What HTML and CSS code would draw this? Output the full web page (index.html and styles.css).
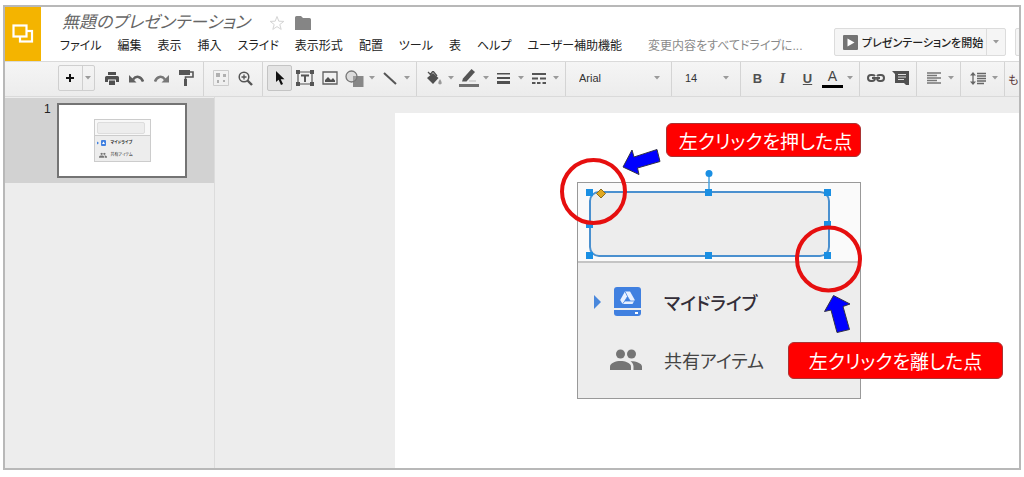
FILE: index.html
```html
<!DOCTYPE html>
<html lang="ja">
<head>
<meta charset="utf-8">
<title>無題のプレゼンテーション</title>
<link rel="stylesheet" href="styles.css">
</head>
<body>
<svg class="defs" width="0" height="0" aria-hidden="true">
  <symbol id="caret" viewBox="0 0 6 4"><path d="M0 0h6L3 3.500z" fill="#9a9a9a"/></symbol>
  <symbol id="drive" viewBox="0 0 27 30"><path d="M3 0h21a3 3 0 0 1 3 3v18H0V3a3 3 0 0 1 3-3z" fill="#4080e0"/><path d="M0 23h27v3a3 3 0 0 1-3 3H3a3 3 0 0 1-3-3z" fill="#4080e0"/><rect x="21" y="25" width="3" height="2" fill="#fff"/><path d="M11 4.500h5l4.800 8.500-2.300 4H8.500l-2.300-4z" fill="#e8f0ff"/><path d="M13.500 9.500l2.700 4.500h-5.400zM13.500 9.500L11 4.500M10.800 14l-2.300 3M16.200 14h4.500" fill="#4080e0" stroke="#4080e0" stroke-width=".8"/></symbol>
  <symbol id="people" viewBox="0 0 32 22"><g fill="#757575"><circle cx="10.500" cy="5" r="4.500"/><circle cx="21.500" cy="5" r="4.500"/><path d="M0 21v-3.500C0 14 6 12 10.500 12S21 14 21 17.500V21z"/><path d="M20.500 12.200C25.500 12 32 14 32 17.500V21h-8.500v-3.500c0-2.300-1.200-4-3-5.300z"/></g></symbol>
</svg>
<div class="window">
  <header class="header">
    <a class="logo" href="#" aria-label="スライド ホーム"><svg width="22" height="20" viewBox="0 0 22 20" fill="#f4b400" stroke="#fff" stroke-width="2.200"><rect x="8" y="7" width="12" height="10.500"/><rect x="1.500" y="1.500" width="13" height="11"/></svg></a>
    <div class="doc">
      <div class="title-row">
        <h1 class="title">無題のプレゼンテーション</h1>
        <button class="plain" aria-label="スター"><svg width="16" height="16" viewBox="0 0 16 16"><path d="M8 1.500l1.800 4.700 5 .2-4 3.100 1.400 4.900L8 11.600l-4.200 2.800 1.400-4.900-4-3.100 5-.2z" fill="#fff" stroke="#d4d4d4"/></svg></button>
        <button class="plain" aria-label="フォルダ"><svg width="16" height="14" viewBox="0 0 16 14"><path d="M0 1.500Q0 0 1.500 0H6l2 2h6.500Q16 2 16 3.500V14H0z" fill="#858585"/></svg></button>
      </div>
      <nav class="menu">
        <button>ファイル</button><button>編集</button><button>表示</button><button>挿入</button><button>スライド</button><button>表示形式</button><button>配置</button><button>ツール</button><button>表</button><button>ヘルプ</button><button>ユーザー補助機能</button>
        <span class="saved">変更内容をすべてドライブに...</span>
      </nav>
    </div>
    <div class="actions">
      <div class="present">
        <button class="present-main"><svg width="15" height="15" viewBox="0 0 15 15"><rect width="15" height="15" rx="1" fill="#747474"/><path d="M4.500 3.500l7 4-7 4z" fill="#fff"/></svg>プレゼンテーションを開始</button>
        <button class="present-more" aria-label="プレゼンテーションのオプション"><svg width="6" height="4"><use href="#caret"/></svg></button>
      </div>
      <button class="more-action" aria-label="コメント"></button>
    </div>
  </header>

  <div class="toolbar" role="toolbar">
    <div class="group first">
      <div class="add"><button aria-label="新しいスライド"><svg width="8" height="8"><path d="M4 0v8M0 4h8" stroke="#111" stroke-width="2"/></svg></button><button aria-label="レイアウト"><svg width="6" height="4"><use href="#caret"/></svg></button></div>
      <button class="tool" aria-label="印刷"><svg width="14" height="13" fill="#505050"><path d="M3 0h8v3H3zM1.500 4h11Q14 4 14 5.500V10h-3V7.500H3V10H0V5.500Q0 4 1.500 4zM4 8.500h6V13H4z"/></svg></button>
      <button class="tool" aria-label="元に戻す"><svg width="15" height="9"><path d="M4 5.500C7 1.500 12 2 14 7.500" fill="none" stroke="#606060" stroke-width="2.500"/><path d="M0 1v7.500h7.500z" fill="#606060"/></svg></button>
      <button class="tool" aria-label="やり直し"><svg width="15" height="9"><path d="M11 5.500C8 1.500 3 2 1 7.500" fill="none" stroke="#777" stroke-width="2.500"/><path d="M15 1v7.500H7.500z" fill="#777"/></svg></button>
      <button class="tool" aria-label="書式の貼り付け"><svg width="15" height="16"><path d="M0 0h11v5H0zM5 9h3v7H5z" fill="#555"/><path d="M11 2h3v5H6.500v3" fill="none" stroke="#555" stroke-width="1.600"/></svg></button>
    </div>
    <div class="group">
      <button class="tool" aria-label="全体表示"><svg width="16" height="16" fill="#b0b0b0"><path d="M.5.5h15v15H.5z" fill="none" stroke="#ccc"/><path d="M3 3h4v4H3zM10 4h3v3h-3zM4 10h2v3H4zM10 10h2v2h-2z"/></svg></button>
      <button class="tool" aria-label="ズーム"><svg width="15" height="15" fill="none" stroke="#555"><circle cx="6" cy="6" r="4.800" stroke-width="1.500"/><path d="M9.500 9.500l4.500 4.500" stroke-width="2.400"/><path d="M3.500 6h5M6 3.500v5" stroke-width="1.300"/></svg></button>
    </div>
    <div class="group">
      <button class="tool active" aria-label="選択"><svg width="10" height="14"><path d="M1 0v11l2.600-2.300L6 14l2-1-2.300-4.800H9.500z" fill="#111"/></svg></button>
      <button class="tool" aria-label="テキスト ボックス"><svg width="18" height="16"><path d="M2 2h14v12H2z" fill="none" stroke="#555" stroke-width="1.200"/><path d="M0 0h4v4H0zM14 0h4v4h-4zM0 12h4v4H0zM14 12h4v4h-4zM5 4.500h8v2H10V12H8V6.500H5z" fill="#555"/></svg></button>
      <button class="tool" aria-label="画像"><svg width="16" height="14"><path d="M1 1h14v12H1z" fill="none" stroke="#606060" stroke-width="1.300"/><path d="M3 11V9l3-3 3 3 2-2 2 2.500V11z" fill="#505050"/></svg></button>
      <button class="tool drop" aria-label="図形"><svg width="19" height="17"><path d="M8 6h10.500v11H8z" fill="#888"/><circle cx="6.500" cy="6.500" r="5.500" fill="#bbb" fill-opacity=".4" stroke="#777" stroke-width="1.300"/></svg><svg width="6" height="4"><use href="#caret"/></svg></button>
      <button class="tool drop" aria-label="線"><svg width="14" height="13"><path d="M1 1l12 11" stroke="#555" stroke-width="2"/></svg><svg width="6" height="4"><use href="#caret"/></svg></button>
    </div>
    <div class="group">
      <button class="tool drop" aria-label="塗りつぶし"><svg width="16" height="14"><path d="M1 7l6-5 5.500 5L7 13z" fill="#505050"/><path d="M2 1l4 4M4 4l3-4 4 5" fill="none" stroke="#505050" stroke-width="1.300"/><path d="M14 8q3.500 5 0 5.500-3.500-.5 0-5.500z" fill="#999"/></svg><svg width="6" height="4"><use href="#caret"/></svg></button>
      <button class="tool drop" aria-label="枠線の色"><svg width="20" height="18"><path d="M4 9.500L12.500 0 16 3 7.500 12.500H3z" fill="#555"/><path d="M10 12h7" stroke="#bbb"/><path d="M0 15h20v3H0z" fill="#707070"/></svg><svg width="6" height="4"><use href="#caret"/></svg></button>
      <button class="tool drop" aria-label="枠線の太さ"><svg width="13" height="11" fill="#505050"><path d="M0 0h13v1.500H0zM0 4h13v2H0zM0 8h13v3H0z"/></svg><svg width="6" height="4"><use href="#caret"/></svg></button>
      <button class="tool drop" aria-label="枠線の種類"><svg width="14" height="11" fill="#555"><path d="M0 0h14v2H0zM0 4.500h6v2H0zM8 4.500h6v2H8zM0 9h3.500v2H0zM5 9h3.500v2H5zM10.500 9H14v2h-3.500z"/></svg><svg width="6" height="4"><use href="#caret"/></svg></button>
    </div>
    <div class="group"><div class="picker family"><select aria-label="フォント"><option>Arial</option></select><svg width="6" height="4"><use href="#caret"/></svg></div></div>
    <div class="group"><div class="picker size"><select aria-label="フォントサイズ"><option>14</option></select><svg width="6" height="4"><use href="#caret"/></svg></div></div>
    <div class="group">
      <button class="tool letter bold" aria-label="太字">B</button>
      <button class="tool letter italic" aria-label="斜体">I</button>
      <button class="tool letter underline" aria-label="下線">U</button>
      <button class="tool drop" aria-label="文字の色"><span class="text-color">A</span><svg width="6" height="4"><use href="#caret"/></svg></button>
    </div>
    <div class="group tight">
      <button class="tool" aria-label="リンク"><svg width="18" height="8" fill="none" stroke="#555" stroke-width="2"><path d="M8 2Q7 1 5 1H4a3 3 0 0 0 0 6h1q3 0 3-3H5M10 2q1-1 3-1h1a3 3 0 0 1 0 6h-1q-3 0-3-3h3" /></svg></button>
      <button class="tool" aria-label="コメントを追加"><svg width="17" height="14"><path d="M0 0h17v14h-3l-2-2H3V3z" fill="#505050"/><path d="M6 3.500h8M6 6h8M6 8.500h6" stroke="#ddd"/></svg></button>
    </div>
    <div class="group">
      <button class="tool drop" aria-label="配置"><svg width="14" height="12" fill="none" stroke="#777" stroke-width="1.300"><path d="M0 1h14M0 3.500h10M0 6h14M0 8.500h10M0 11h14"/></svg><svg width="6" height="4"><use href="#caret"/></svg></button>
    </div>
    <div class="group">
      <button class="tool drop" aria-label="行間隔"><svg width="16" height="13" fill="none" stroke="#666" stroke-width="1.300"><path d="M7 1.500h9M7 4h9M7 6.500h9M7 9h9M7 11.500h7M3 2v9"/><path d="M3 0l3 3.500H0zM3 13l3-3.500H0z" fill="#666" stroke="none"/></svg><svg width="6" height="4"><use href="#caret"/></svg></button>
    </div>
    <button class="overflow">も</button>
  </div>

  <main class="workspace">
    <aside class="filmstrip">
      <div class="film-item">
        <span class="film-number">1</span>
        <div class="thumb">
          <div class="mini">
            <div class="mini-top"><div class="mini-shape"></div></div>
            <div class="mini-row"><svg width="10" height="6"><path d="M0 1.500v3L2 3z" fill="#4080e0"/><rect x="4" width="5" height="6" rx="1" fill="#4080e0"/><path d="M6.500 1.500L8 4H5z" fill="#fff"/></svg><b>マイドライブ</b></div>
            <div class="mini-row"><svg width="10" height="6" viewBox="-4 -2 32 24"><use href="#people" width="32" height="22"/></svg><span>共有アイテム</span></div>
          </div>
        </div>
      </div>
    </aside>
    <section class="stage">
      <div class="slide">
        <div class="card">
          <div class="card-top"></div>
          <div class="card-row mine"><svg width="9" height="14"><path d="M1 0v14l7-7z" fill="#4a88dc"/></svg><svg width="27" height="30"><use href="#drive"/></svg><b>マイドライブ</b></div>
          <div class="card-row shared"><svg width="32" height="22"><use href="#people"/></svg><span>共有アイテム</span></div>
        </div>
        <svg class="drawing" width="625" height="356" viewBox="395 113 625 356">
          <rect x="590" y="192" width="239" height="64" rx="9" fill="#ededed" stroke="#4a90cf" stroke-width="2"/>
          <path d="M709 192v-18" stroke="#4aa3df" stroke-width="1.500"/><circle cx="709" cy="173.500" r="3.500" fill="#1a8fe3"/>
          <g fill="#1a8fe3"><path d="M586 189h7v7h-7zM705 189h7v7h-7zM824 189h7v7h-7zM586 221h7v7h-7zM824 221h7v7h-7zM586 252h7v7h-7zM705 252h7v7h-7zM824 252h7v7h-7z"/></g>
          <path d="M601 189l4.500 4.500-4.500 4.500-4.500-4.500z" fill="#e0a820" stroke="#8a6d20"/>
          <circle cx="593.500" cy="191.500" r="31.500" fill="none" stroke="#e60f0f" stroke-width="4"/>
          <circle cx="828.500" cy="259" r="31.500" fill="none" stroke="#e60f0f" stroke-width="4"/>
          <path d="M623 167L632 150l2 7 23-7.500 3 12-22.500 6.500 1.500 6.500z" fill="#00f" stroke="#334" stroke-width="1"/>
          <path d="M833.500 295.500L850 304l-7 2.500 6.500 23-12.500 3-6-22.500-6.500 1.500z" fill="#00f" stroke="#334" stroke-width="1"/>
        </svg>
        <div class="label pressed">左クリックを押した点</div>
        <div class="label released">左クリックを離した点</div>
      </div>
    </section>
  </main>
</div>
</body>
</html>
```
FILE: styles.css
```css
* { box-sizing: border-box; }
body {
  margin: 0;
  padding: 5px 3px 7px;
  height: 100vh;
  background: #fff;
  color: #222;
  font-family: "Liberation Sans", "Noto Sans CJK JP", sans-serif;
  font-size: 12px;
  font-feature-settings: "palt";
}
button, select {
  font: inherit;
  font-feature-settings: inherit;
  color: inherit;
  border: 0;
  margin: 0;
  padding: 0;
  background: none;
  white-space: nowrap;
}
svg { display: block; flex: none; }
.defs { position: absolute; }
.window {
  display: flex;
  flex-direction: column;
  height: 100%;
  border: 2px solid #b8b8b8;
  overflow: hidden;
}

.header { display: flex; height: 54px; flex: none; }
.logo {
  width: 36px;
  display: flex;
  align-items: center;
  justify-content: center;
  background: #f4b400;
}
.doc { flex: 1; min-width: 0; padding: 4px 0 0 19px; }
.title-row { display: flex; align-items: center; height: 24px; gap: 10px; padding-left: 2px; }
.title {
  margin: 0 9px 0 0;
  font-size: 17px;
  line-height: 24px;
  font-weight: 400;
  font-style: italic;
  color: #666;
  white-space: nowrap;
}
.plain { display: flex; }
.menu { display: flex; gap: 16px; line-height: 22px; white-space: nowrap; }
.saved { color: #8a8a8a; padding-left: 10px; }
.actions { display: flex; gap: 9px; padding-top: 21px; height: 49px; margin-right: -14px; }
.present {
  display: flex;
  border: 1px solid #dcdcdc;
  border-radius: 2px;
  background: #f5f5f5;
}
.present-main { display: flex; align-items: center; gap: 4px; padding-left: 8px; width: 151px; font-size: 11px; font-weight: 500; }
.present-more { display: grid; place-items: center; width: 19px; border-left: 1px solid #dcdcdc; }
.more-action { width: 18px; border: 1px solid #dcdcdc; border-radius: 2px; background: #f5f5f5; }

.toolbar {
  display: flex;
  flex: none;
  height: 36px;
  border: solid #dadada;
  border-width: 1px 0;
  background: linear-gradient(#f5f5f5, #ececec);
}
.group {
  display: flex;
  align-items: center;
  flex: none;
  padding: 0 4px 2px;
  border-right: 1px solid #d4d4d4;
}
.first { padding-left: 53px; }
.tight { padding: 0 3px 2px; }
.add {
  display: flex;
  width: 37px;
  height: 26px;
  margin-right: 4px;
  border: 1px solid #cfcfcf;
  border-radius: 2px;
}
.add button { display: grid; place-items: center; flex: 1; }
.add button:first-child { flex: 2; border-right: 1px solid #cfcfcf; }
.tool { display: grid; place-items: center; width: 25px; height: 26px; }
.active { border: 1px solid #c4c4c4; border-radius: 2px; background: #e4e4e4; }
.drop { width: 35px; grid-template-columns: 25px 10px; }
.letter { font-size: 13px; font-weight: 700; color: #505050; }
.italic { font-family: "Liberation Serif", serif; font-style: italic; font-size: 15px; }
.underline { text-decoration: underline; }
.text-color { width: 21px; border-bottom: 3px solid #000; font-size: 14px; line-height: 17px; color: #444; }
.picker { display: grid; grid-template-columns: 1fr 20px; align-items: center; }
.picker select { grid-area: 1 / 1 / 2 / 3; height: 26px; padding-left: 9px; appearance: none; font-size: 11px; color: #333; }
.picker svg { grid-area: 1 / 2; justify-self: center; pointer-events: none; }
.family { width: 97px; }
.size { width: 60px; }
.overflow { padding-left: 3px; font-size: 11px; color: #533; }

.workspace { display: flex; flex: 1; min-height: 0; background: #ededed; }
.filmstrip { width: 210px; border-right: 1px solid #dcdcdc; padding-top: 1px; }
.film-item { display: flex; gap: 8px; padding: 5px 0 5px 39px; background: #d2d2d2; }
.film-number { width: 5px; font-size: 12px; line-height: 12px; }
.thumb {
  display: flex;
  align-items: flex-start;
  justify-content: center;
  width: 130px;
  height: 75px;
  padding-top: 14px;
  border: 2px solid #747474;
  background: #fff;
}
.mini { width: 57px; height: 43px; border: 1px solid #ccc; background: #ededed; }
.mini-top { height: 16px; padding: 2px; background: #f8f8f8; border-bottom: 1px solid #ccc; }
.mini-shape { width: 48px; height: 12px; border: 1px solid #ddd; border-radius: 2px; background: #ededed; }
.mini-row { display: flex; align-items: center; gap: 4px; height: 12px; padding: 2px 0 0 2px; font-size: 4px; line-height: 6px; }

.stage { display: flex; flex: 1; min-width: 0; padding: 16px 0 0 180px; }
.slide { position: relative; flex: 1; min-width: 0; background: #fff; overflow: hidden; }
.drawing { position: absolute; left: 0; top: 0; }
.card {
  position: absolute;
  left: 182px;
  top: 69px;
  width: 284px;
  height: 217px;
  border: 1px solid #999;
  background: #ededed;
}
.card-top { height: 80px; background: #fafafa; border-bottom: 2px solid #c4c4c4; }
.card-row { display: flex; align-items: center; height: 78px; padding-left: 15px; color: #444; font-size: 18px; }
.mine { gap: 12px; }
.mine b { font-weight: 500; color: #332d38; margin-left: 11px; }
.shared { height: 38px; padding-left: 32px; gap: 22px; }
.label {
  position: absolute;
  display: flex;
  align-items: center;
  justify-content: center;
  border: 1px solid #a33;
  border-radius: 6px;
  background: #f00;
  color: #fff;
  font-size: 19px;
  white-space: nowrap;
}
.pressed { left: 271px; top: 10px; width: 195px; height: 34px; padding-left: 4px; }
.released { left: 393px; top: 229px; width: 215px; height: 37px; }
```
